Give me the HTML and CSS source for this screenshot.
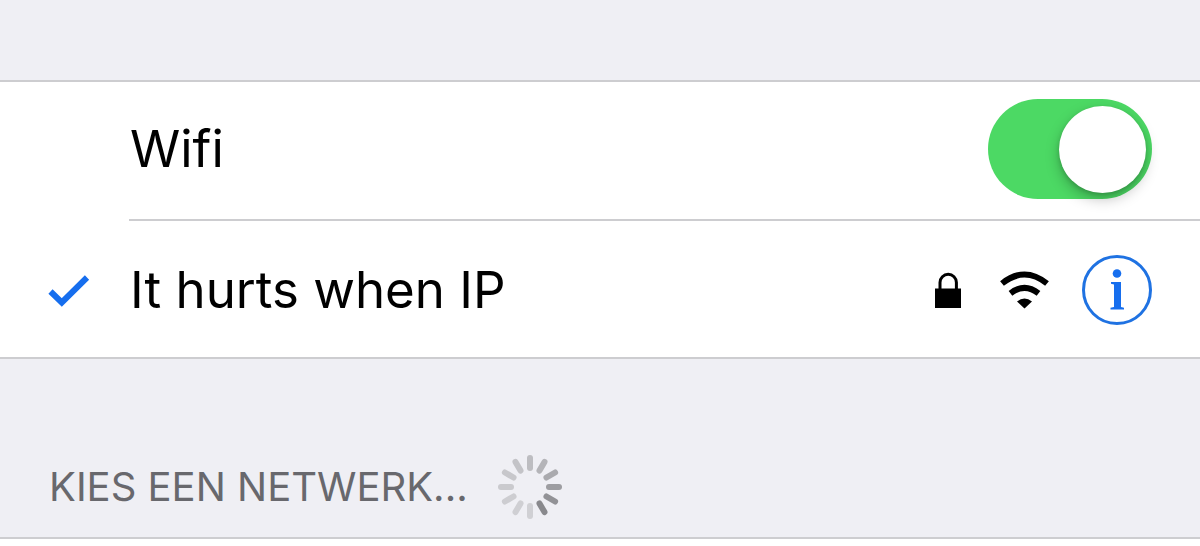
FILE: index.html
```
<!DOCTYPE html>
<html lang="nl">
<head>
<meta charset="utf-8">
<meta name="viewport" content="width=device-width, initial-scale=1">
<title>Wifi</title>
<link rel="stylesheet" href="styles.css">
</head>
<body>
<main class="settings">
  <section class="group">
    <div class="row">
      <label class="row-label" for="wifi-switch">Wifi</label>
      <input class="switch" type="checkbox" role="switch" id="wifi-switch" checked>
    </div>
    <div class="row">
      <svg class="check" viewBox="0 0 42 34" aria-hidden="true"><path d="M2.5 18.5 13.800 29.500 39 4.500"/></svg>
      <span class="row-label">It hurts when IP</span>
      <svg class="lock" viewBox="0 0 27 36" aria-hidden="true">
        <path class="shackle" d="M5 18V10.500a8.200 8.200 0 0 1 16.400 0v7.500"/>
        <path d="M0 16.500H26V36H0Z"/>
      </svg>
      <svg class="signal" viewBox="0 0 50 38" aria-hidden="true">
        <path class="arc" d="M2 12.500Q24.500-5.500 47 12.500"/>
        <path class="arc" d="M10.500 22.300Q24.500 11.500 38.500 22.300"/>
        <path d="M17 30.500Q24.500 24.500 32 30.500L24.500 37.500Z"/>
      </svg>
      <button class="info" type="button" aria-label="Info">
        <svg class="info-icon" viewBox="0 0 70 70" aria-hidden="true">
          <circle class="ring" cx="35" cy="35" r="33.500"/>
          <circle cx="35" cy="18.500" r="4.300"/>
          <path d="M29 27H39V52L42 52.800V54.500H28.500V52.800L32 52V29.500L29 28.700Z"/>
        </svg>
      </button>
    </div>
  </section>
  <header class="section-head">
    <h2 class="section-title">KIES EEN NETWERK...</h2>
    <svg class="spinner" viewBox="-33 -33 66 66" role="img" aria-label="Laden">
      <path stroke="#bdbdc1" d="M0-19V-29"/>
      <path stroke="#b4b4b8" transform="rotate(30)" d="M0-19V-29"/>
      <path stroke="#aaaaae" transform="rotate(60)" d="M0-19V-29"/>
      <path stroke="#9d9da1" transform="rotate(90)" d="M0-19V-29"/>
      <path stroke="#929296" transform="rotate(120)" d="M0-19V-29"/>
      <path stroke="#89898d" transform="rotate(150)" d="M0-19V-29"/>
      <path stroke="#d0d0d4" transform="rotate(180)" d="M0-19V-29"/>
      <path stroke="#cfcfd3" transform="rotate(210)" d="M0-19V-29"/>
      <path stroke="#cdcdd1" transform="rotate(240)" d="M0-19V-29"/>
      <path stroke="#cacace" transform="rotate(270)" d="M0-19V-29"/>
      <path stroke="#c7c7cb" transform="rotate(300)" d="M0-19V-29"/>
      <path stroke="#c3c3c7" transform="rotate(330)" d="M0-19V-29"/>
    </svg>
  </header>
  <section class="group networks" aria-label="Netwerken"></section>
</main>
</body>
</html>
```
FILE: styles.css
```
* { box-sizing: border-box; }

body {
  margin: 0;
  background: #efeff4;
  color: #000;
  font-family: Inter, "Liberation Sans", sans-serif;
}

.settings {
  display: flex;
  flex-direction: column;
  min-height: 100vh;
  padding-top: 80px;
}

.group {
  background: #fff;
  border-top: 2px solid #cdcdd0;
  border-bottom: 2px solid #cdcdd0;
}

.row {
  display: grid;
  grid-template-columns: 82px 1fr auto auto auto;
  align-items: center;
  min-height: 137px;
  padding: 0 48px 3px;
}

.row + .row {
  min-height: 138px;
  padding: 3px 48px 0;
  background: linear-gradient(#cdcdd0, #cdcdd0) 129px 0 / 100% 2px no-repeat;
}

.row-label {
  grid-column: 2;
  font-size: 51px;
  line-height: 64px;
}

.switch {
  grid-column: 5;
  appearance: none;
  display: flex;
  align-items: center;
  justify-content: flex-end;
  width: 164px;
  height: 100px;
  margin: 0;
  padding: 6px;
  border-radius: 50px;
  background: #4cd964;
}

.switch::before {
  content: "";
  width: 87px;
  height: 87px;
  border-radius: 50%;
  background: #fff;
  box-shadow: 0 6px 14px rgba(0, 0, 0, 0.25), 0 2px 4px rgba(0, 0, 0, 0.15);
}

.switch:not(:checked) {
  justify-content: flex-start;
  background: #e5e5ea;
}

.check {
  width: 42px;
  height: 34px;
  fill: none;
  stroke: #166eee;
  stroke-width: 6;
}

.lock {
  width: 27px;
  height: 36px;
  margin-right: 38px;
}

.shackle {
  fill: none;
  stroke: #000;
  stroke-width: 3;
}

.signal {
  width: 50px;
  height: 38px;
  margin-right: 32px;
}

.arc {
  fill: none;
  stroke: #000;
  stroke-width: 6;
}

.info {
  width: 70px;
  height: 70px;
  padding: 0;
  border: 0;
  background: none;
  cursor: pointer;
}

.info-icon {
  display: block;
  fill: #166eee;
}

.ring {
  fill: none;
  stroke: #1f72e2;
  stroke-width: 3;
}

.section-head {
  display: flex;
  align-items: center;
  gap: 29px;
  padding: 95px 49px 17px;
}

.section-title {
  margin: 0;
  color: #68686d;
  font-size: 40px;
  font-weight: 400;
  line-height: 50px;
}

.spinner {
  width: 66px;
  height: 66px;
  stroke-width: 6;
  stroke-linecap: round;
}

.networks {
  flex: 1;
  border-bottom: 0;
}
```
